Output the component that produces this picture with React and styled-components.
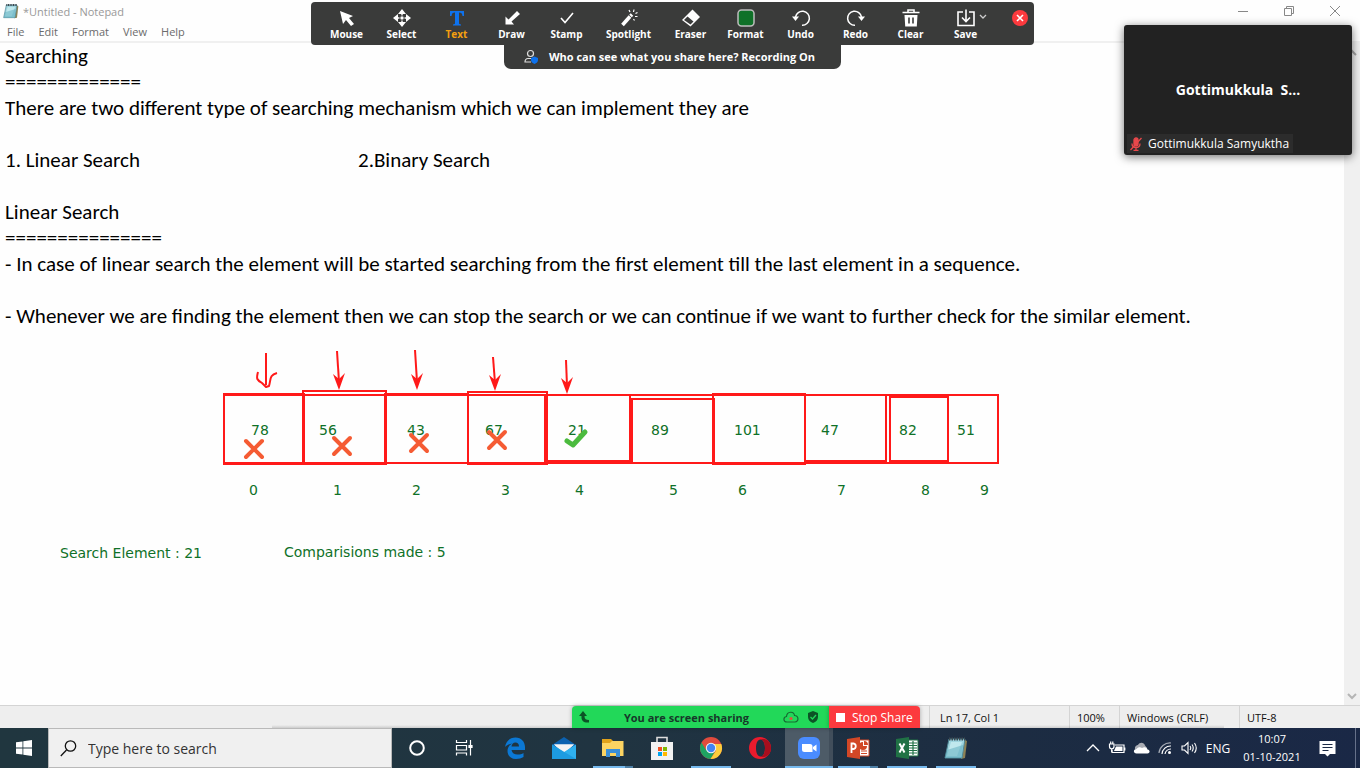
import React from "react";
import styled, { createGlobalStyle, css } from "styled-components";

const ui = `"Open Sans", "Noto Sans", sans-serif`;

const GlobalStyle = createGlobalStyle`
  * { box-sizing: border-box; }
  body { margin: 0; font-family: ${ui}; font-size: 12px; background: #fefefe; }
  button, input, textarea { font: inherit; color: inherit; border: 0; margin: 0; padding: 0; background: none; }
  svg { display: block; flex: none; }
`;

const Desktop = styled.div`
  position: relative;
  display: flex;
  flex-direction: column;
  min-height: 100vh;
  overflow: hidden;
`;

/* Notepad */
const Notepad = styled.main`
  flex: 1;
  display: flex;
  flex-direction: column;
  background: #fefefe;
`;
const TitleBar = styled.header`
  display: flex;
  align-items: center;
  height: 22px;
  padding: 0 2px 0 3px;
  color: #999;
  font-size: 11px;
`;
const Title = styled.h1`
  flex: 1;
  margin: 0;
  padding-left: 4px;
  font-size: inherit;
  font-weight: 400;
`;
const WindowButton = styled.button`
  display: grid;
  place-items: center;
  width: 46px;
  height: 20px;
`;
const MenuBar = styled.nav`
  display: flex;
  gap: 14px;
  height: 21px;
  padding-left: 7px;
  border-bottom: 2px solid #f0f0f0;
  color: #6b6b6b;
  font-size: 11px;
  line-height: 20px;
`;
const EditorArea = styled.div`
  flex: 1;
  display: flex;
`;
const Editor = styled.textarea`
  flex: 1;
  resize: none;
  outline: 0;
  overflow: hidden;
  padding: 0 5px;
  color: #000;
  font-family: Calibri, Carlito, Lato, sans-serif;
  font-size: 21px;
  line-height: 26px;
  tab-size: 353px;
  white-space: pre;
`;
const ScrollBar = styled.div`
  display: flex;
  flex-direction: column;
  justify-content: space-between;
  align-items: center;
  width: 16px;
  padding: 6px 0 5px;
  background: #f0f0f0;
`;
const StatusBar = styled.footer`
  display: flex;
  justify-content: flex-end;
  height: 23px;
  border-top: 1px solid #d4d4d4;
  background: #eee;
  color: #111;
  font-size: 11px;
  line-height: 23px;
`;
const StatusCell = styled.span`
  width: ${(p) => p.$width}px;
  padding-left: ${(p) => p.$pad || 7}px;
  border-left: 1px solid #d4d4d4;
  white-space: nowrap;
`;

/* Annotations drawn over the shared screen */
const Canvas = styled.div`
  position: absolute;
  inset: 0;
  pointer-events: none;
`;
const Strokes = styled.svg`
  position: absolute;
  left: 0;
  top: 0;
`;
const Note = styled.span`
  position: absolute;
  left: ${(p) => p.$x}px;
  top: ${(p) => p.$y}px;
  color: #0f7128;
  font-family: "DejaVu Sans", sans-serif;
  font-size: 14px;
  line-height: 20px;
  white-space: nowrap;
`;

/* Meeting controls */
const Controls = styled.div`
  position: absolute;
  top: 2px;
  left: 0;
  right: 15px;
  display: flex;
  flex-direction: column;
  align-items: center;
  pointer-events: none;
`;
const ToolBar = styled.div`
  display: flex;
  height: 43px;
  padding: 0 6px 0 8px;
  border-radius: 4px;
  background: #3a3b3a;
  color: #fff;
  pointer-events: auto;
`;
const Tool = styled.button`
  position: relative;
  display: flex;
  flex-direction: column;
  align-items: center;
  width: ${(p) => (p.$wide ? 69 : 55)}px;
  padding-top: 6px;
  color: ${(p) => (p.$active ? "#f5a010" : "#fff")};
  font-size: 10px;
  font-weight: 700;
  line-height: 12px;
`;
const Caret = styled.svg`
  position: absolute;
  left: 41px;
  top: 12px;
`;
const CloseTool = styled.button`
  align-self: flex-start;
  margin: 8px 0 0 19px;
  width: 16px;
  height: 16px;
`;
const Banner = styled.button`
  display: flex;
  align-items: center;
  gap: 10px;
  height: 24px;
  padding: 0 26px 2px 20px;
  border-radius: 0 0 7px 7px;
  background: #3a3b3a;
  color: #fff;
  font-size: 11px;
  font-weight: 700;
  pointer-events: auto;
`;
const Participant = styled.section`
  position: absolute;
  top: 25px;
  right: 8px;
  display: flex;
  flex-direction: column;
  width: 228px;
  height: 130px;
  border-radius: 3px;
  background: #222;
  box-shadow: 0 2px 10px rgba(0, 0, 0, 0.55);
  color: #fff;
`;
const ParticipantName = styled.strong`
  flex: 1;
  display: grid;
  place-items: end center;
  padding-bottom: 34px;
  font-size: 14px;
  white-space: pre;
  line-height: 20px;
`;
const ParticipantLabel = styled.span`
  display: flex;
  align-items: center;
  align-self: flex-start;
  gap: 5px;
  height: 19px;
  margin: 0 0 2px 3px;
  padding: 0 4px 0 2px;
  background: #2c2c2c;
  font-size: 12px;
`;
const ShareBar = styled.div`
  position: absolute;
  bottom: 40px;
  left: 0;
  right: 0;
  display: flex;
  justify-content: center;
  height: 22px;
  padding-left: 132px;
  pointer-events: none;
`;
const Sharing = styled.div`
  display: flex;
  align-items: center;
  justify-content: space-between;
  width: 257px;
  padding: 0 10px 0 6px;
  border-radius: 4px 0 0 0;
  background: #22d859;
  box-shadow: 0 0 4px rgba(0, 0, 0, 0.3);
  color: #17382a;
  font-size: 11px;
  font-weight: 700;
`;
const SharingIcons = styled.span`
  display: flex;
  align-items: center;
  gap: 8px;
`;
const StopShare = styled.button`
  display: flex;
  align-items: center;
  gap: 7px;
  width: 91px;
  padding-left: 7px;
  border-radius: 0 4px 0 0;
  background: #fc3a3e;
  box-shadow: 0 0 4px rgba(0, 0, 0, 0.3);
  color: #fff;
  font-size: 12px;
  white-space: nowrap;
  pointer-events: auto;
`;

/* Windows taskbar */
const TaskBar = styled.footer`
  position: relative;
  display: flex;
  height: 40px;
  background: linear-gradient(90deg, #20363f 0%, #203441 45%, #1c2c42 75%, #1a2846 100%);
  color: #fff;
`;
const EdgeShadow = styled.div`
  position: absolute;
  bottom: 40px;
  left: 20%;
  right: 10%;
  height: 3px;
  background: linear-gradient(transparent, rgba(0, 0, 0, 0.14));
`;
const Start = styled.button`
  display: grid;
  place-items: center;
  width: 48px;
`;
const Search = styled.label`
  display: flex;
  align-items: center;
  gap: 11px;
  width: 344px;
  padding-left: 11px;
  border: 1px solid #b9b9b9;
  background: #f0f0f0;
  color: #222;
`;
const SearchInput = styled.input`
  flex: 1;
  min-width: 0;
  outline: 0;
  font-size: 14px;
  &::placeholder { color: #333; opacity: 1; }
`;
const Apps = styled.div`
  flex: 1;
  display: flex;
  gap: 1px;
  padding-left: 1px;
`;
const AppButton = styled.button`
  position: relative;
  display: grid;
  place-items: center;
  width: 48px;
  ${(p) => p.$open && css`
    &::after {
      content: "";
      position: absolute;
      left: 4px;
      right: 4px;
      bottom: 0;
      height: 2px;
      background: ${p.$many ? "linear-gradient(90deg, #76b9ed 32px, #4d7fa5 32px)" : "#76b9ed"};
    }
  `}
  ${(p) => p.$current && css`
    background: linear-gradient(90deg, #4d5b67 44px, #414e5b 44px);
    &::after { left: 0; right: 0; }
  `}
`;
const Tray = styled.div`
  display: flex;
  align-items: center;
  padding-right: 4px;
`;
const TrayButton = styled.button`
  display: grid;
  place-items: center;
  width: ${(p) => p.$width || 24}px;
  height: 40px;
  font-size: 12px;
`;
const Clock = styled.time`
  width: 70px;
  margin-left: 2px;
  text-align: center;
  font-size: 11px;
  line-height: 18px;
`;
const Peek = styled.span`
  height: 40px;
  margin-left: 8px;
  border-left: 1px solid #66718a;
`;

const text = [
  "Searching",
  "=============",
  "There are two different type of searching mechanism which we can implement they are",
  "",
  "1. Linear Search\t2.Binary Search",
  "",
  "Linear Search",
  "===============",
  "- In case of linear search the element will be started searching from the first element till the last element in a sequence.",
  "",
  "- Whenever we are finding the element then we can stop the search or we can continue if we want to further check for the similar element.",
].join("\n");

const boxes = [
  [224, 395, 998, 463], [224, 394, 304, 464], [303, 391, 386, 464], [385, 394, 468, 463],
  [468, 392, 547, 464], [545, 395, 630, 461], [632, 399, 714, 463], [713, 394, 805, 464],
  [805, 395, 886, 461], [890, 397, 948, 461],
];
const arrows = [[337, 351, 339, 390], [415, 350, 417, 390], [493, 357, 495, 391], [566, 360, 567, 394]];
const crosses = [[254, 449], [342, 446], [419, 443], [497, 440]];
const values = [[251, "78"], [319, "56"], [407, "43"], [485, "67"], [568, "21"], [651, "89"], [734, "101"], [821, "47"], [899, "82"], [957, "51"]];
const indexes = [249, 333, 412, 501, 575, 669, 738, 837, 921, 980];

const NotepadIcon = ({ size = 16 }) => (
  <svg width={size} height={size} viewBox="0 0 24 24">
    <path d="M19 3 23 5 21 22 17 23Z" fill="#8d8256" />
    <path d="M5 3H21L18 22H1Z" fill="#9fd5df" stroke="#4e8795" />
    <path d="M7 6H18L13 20H3Z" fill="#d3f2f5" opacity=".65" />
    <path d="M3 14 19 9 18 22H1Z" fill="#5aa9bb" opacity=".5" />
    <path d="M5 3H21" stroke="#3c4950" strokeWidth="3" strokeDasharray="1.5 1" />
  </svg>
);

const toolIcons = {
  Mouse: <path d="M4 3 17 8 13 10 18 16 15 18 10 12 7 16Z" fill="#fff" transform="translate(-1 0)" />,
  Select: (
    <g fill="#fff">
      <path d="M10 1 14 6H6ZM10 19 14 14H6ZM1 10 6 6V14ZM19 10 14 6V14Z" />
      <path d="M10 5V15M5 10H15" stroke="#fff" strokeWidth="1.4" />
      <circle cx="10" cy="10" r="2.2" stroke="#3a3b3a" />
    </g>
  ),
  Text: (
    <path d="M3 3H17V8H15.5C15 5.500 14.500 4.600 12 4.600V15C12 16 12.500 16.300 14 16.500V17.500H6V16.500C7.500 16.300 8 16 8 15V4.600C5.500 4.600 5 5.500 4.500 8H3Z" fill="#0e72ed" />
  ),
  Draw: <path d="M15 3 18 6 9.500 13.500 12 16.500H3.500V8.500L6.500 11.500Z" fill="#fff" />,
  Stamp: <path d="M4 10 8 14.500 16 5" fill="none" stroke="#fff" strokeWidth="1.600" />,
  Spotlight: (
    <g stroke="#fff" fill="#fff">
      <path d="M3.500 17 11 8.500" strokeWidth="3.600" />
      <path d="M11.500 8 13 6.500" strokeWidth="3.600" />
      <path d="M10 2 11 4M15 1.500 14.500 4M18.500 4.500 16.500 5.500M16 8.500H18.500M14.500 11 15.500 12.500" strokeWidth="1.200" />
    </g>
  ),
  Eraser: (
    <g>
      <path d="M1 12 11.500 1.500 19 9 9.500 18.500Z" fill="#fff" />
      <path d="M3 12 6.500 8.500 12.500 13.500 9.500 16.500Z" fill="#3a3b3a" />
    </g>
  ),
  Format: <rect x="2" y="2" width="16" height="16" rx="3.500" fill="#0f7128" stroke="#bdbdbd" strokeWidth="1.500" />,
  Undo: (
    <g>
      <path d="M4.500 9A7 7 0 1 1 11 17.200" fill="none" stroke="#fff" strokeWidth="1.500" />
      <path d="M1 8.500H8L4.500 13Z" fill="#fff" />
    </g>
  ),
  Redo: (
    <g>
      <path d="M15.500 9A7 7 0 1 0 9 17.200" fill="none" stroke="#fff" strokeWidth="1.500" />
      <path d="M19 8.500H12L15.500 13Z" fill="#fff" />
    </g>
  ),
  Clear: (
    <g fill="none" stroke="#fff" strokeWidth="1.600">
      <path d="M1.500 4.500H18.500M7 4V2H13V4" />
      <path d="M3.500 7H16.500L15.800 18.500H4.200Z" fill="#fff" stroke="none" />
      <path d="M8 9.500V15.500M12 9.500V15.500" stroke="#3a3b3a" />
    </g>
  ),
  Save: (
    <g fill="none" stroke="#fff" strokeWidth="1.600">
      <path d="M7 4H2V17.500H18V4H13" />
      <path d="M10 1.500V13M6 9.500 10 13.500 14 9.500" />
    </g>
  ),
};

const appIcons = [
  { name: "Cortana", art: <circle cx="12" cy="12" r="6.800" fill="none" stroke="#fff" strokeWidth="2" /> },
  {
    name: "Task View",
    art: (
      <g fill="none" stroke="#fff" strokeWidth="1.200" transform="translate(-2 0)">
        <path d="M4.500 4V6.500H14.500V4M4.500 19.500V17H14.500V19.500M4.500 9.500H14.500V14H4.500ZM18.500 4V19.500" />
        <path d="M17 9.500H20V11.500H17Z" fill="#fff" />
      </g>
    ),
  },
  {
    name: "Edge",
    art: <path d="M2 11C3 5 7 1.500 12.500 1.500 18.500 1.500 22 6 22 11V14H8.500C9 17 11.500 18.500 14.500 18.500 17 18.500 19 18 20.500 17V21C18.500 22.300 16 23 13 23 7.500 23 4.500 19.500 4.500 15 4.500 11.500 6.500 8.500 9.500 7.500 6.500 7.700 3.800 9 2 11ZM8.500 10.500H16C16 8 14.500 6.500 12.500 6.500 10 6.500 8.700 8.200 8.500 10.500Z" fill="#0b78d4" fillRule="evenodd" />,
  },
  {
    name: "Mail",
    art: (
      <g>
        <path d="M0 9 12 1 24 9V23H0Z" fill="#0c62b0" />
        <path d="M2 8.500H22L13 17H11Z" fill="#f4f4f4" />
        <path d="M0 8.500 12 16 24 8.500V23H0Z" fill="#2fb0ee" />
        <path d="M2 8.500H22L12 15.500Z" fill="#f4f4f4" />
        <path d="M0 8.500V23H24Z" fill="#1593dc" opacity=".7" />
      </g>
    ),
  },
  {
    name: "File Explorer",
    open: true,
    many: true,
    art: (
      <g>
        <path d="M1 3H10L12 5H22V20H1Z" fill="#e0a21b" />
        <path d="M1 7H9L11 5H22.500V20H1Z" fill="#fcd462" />
        <path d="M5 21V13H19V21H15V17H9V21Z" fill="#3a8fd8" />
      </g>
    ),
  },
  {
    name: "Microsoft Store",
    art: (
      <g>
        <path d="M7 7V1.500H17V7" fill="none" stroke="#ddd" strokeWidth="1.600" />
        <path d="M1 6H23V24H1Z" fill="#f2f2f2" />
        <path d="M8 11h4v4H8Z" fill="#f25022" />
        <path d="M13 11h4v4H13Z" fill="#7fba00" />
        <path d="M8 16h4v4H8Z" fill="#00a4ef" />
        <path d="M13 16h4v4H13Z" fill="#ffb900" />
      </g>
    ),
  },
  {
    name: "Chrome",
    open: true,
    art: (
      <g>
        <circle cx="12" cy="12" r="11" fill="#e04b3e" />
        <path d="M2.500 6.500A11 11 0 0 0 11.500 23L16.500 14.500 12 12 7 14Z" fill="#1ea362" />
        <path d="M22.300 8H12L17 14.500 11.500 23A11 11 0 0 0 22.300 8Z" fill="#fccd3c" />
        <circle cx="12" cy="12" r="5.200" fill="#f4f4f4" />
        <circle cx="12" cy="12" r="4.200" fill="#4285f4" />
      </g>
    ),
  },
  {
    name: "Opera",
    art: (
      <g>
        <path d="M12 1A11 11 0 1 0 12 23 11 11 0 1 0 12 1ZM12.500 3.500C15.500 3.500 17 7.500 17 12S15.500 20.500 12.500 20.500 8 16.500 8 12 9.500 3.500 12.500 3.500Z" fill="#ea1b2d" fillRule="evenodd" />
        <path d="M12.500 3.500C15.500 3.500 17 7.500 17 12S15.500 20.500 12.500 20.500C15 22 23 21 23 12S15 2 12.500 3.500Z" fill="#a70e1d" />
      </g>
    ),
  },
  {
    name: "Zoom",
    open: true,
    current: true,
    art: (
      <g>
        <rect x="1" y="1" width="22" height="22" rx="6" fill="#4a8cff" />
        <path d="M5 8H13A2.500 2.500 0 0 1 15.500 10.500V16H7.500A2.500 2.500 0 0 1 5 13.500ZM16 11 19.500 8.500V15.500L16 13Z" fill="#fff" />
      </g>
    ),
  },
  {
    name: "PowerPoint",
    open: true,
    many: true,
    art: (
      <g>
        <path d="M11 4H23V20H11Z" fill="#fff" stroke="#d24726" />
        <path d="M15 15H21M15 17.500H21" stroke="#d24726" strokeWidth="1.200" />
        <path d="M17 6V10H21A4 4 0 1 1 17 6ZM18 5A4 4 0 0 1 22 9H18Z" fill="#d24726" />
        <path d="M1 3 14 1V23L1 21Z" fill="#d24726" />
        <path d="M5.500 17V7.500H7.500A2.800 2.800 0 0 1 7.500 13H5.500" fill="none" stroke="#fff" strokeWidth="1.800" />
      </g>
    ),
  },
  {
    name: "Excel",
    open: true,
    art: (
      <g>
        <path d="M11 4H23V20H11Z" fill="#fff" stroke="#207245" />
        <path d="M14 7H22M14 9.500H22M14 12H22M14 14.500H22M14 17H22M18 5V19" stroke="#207245" strokeWidth="1.200" />
        <path d="M1 3 14 1V23L1 21Z" fill="#207245" />
        <path d="M4.500 7.500 9.500 16.500M9.500 7.500 4.500 16.500" stroke="#fff" strokeWidth="2" />
      </g>
    ),
  },
];

export default function App() {
  return (
    <>
      <GlobalStyle />
      <Desktop>
        <Notepad>
          <TitleBar>
            <NotepadIcon />
            <Title>*Untitled - Notepad</Title>
            <WindowButton aria-label="Minimize">
              <svg width="12" height="12"><path d="M1 6.500H11" stroke="#888" /></svg>
            </WindowButton>
            <WindowButton aria-label="Restore">
              <svg width="12" height="12"><path d="M1.500 3.500H8.500V10.500H1.500ZM3.500 3.500V1.500H10.500V8.500H8.500" fill="none" stroke="#888" /></svg>
            </WindowButton>
            <WindowButton aria-label="Close">
              <svg width="12" height="12"><path d="M1 1 11 11M11 1 1 11" stroke="#888" /></svg>
            </WindowButton>
          </TitleBar>
          <MenuBar>
            {["File", "Edit", "Format", "View", "Help"].map((m) => <button key={m}>{m}</button>)}
          </MenuBar>
          <EditorArea>
            <Editor aria-label="Document" wrap="off" spellCheck={false} defaultValue={text} />
            <ScrollBar>
              <svg width="10" height="8"><path d="M1 6 5 2 9 6" fill="none" stroke="#a5a5a5" strokeWidth="2" /></svg>
              <svg width="10" height="8"><path d="M1 2 5 6 9 2" fill="none" stroke="#b5b5b5" strokeWidth="2" /></svg>
            </ScrollBar>
          </EditorArea>
          <StatusBar>
            <StatusCell $width={140} $pad={10}>Ln 17, Col 1</StatusCell>
            <StatusCell $width={50}>100%</StatusCell>
            <StatusCell $width={120}>Windows (CRLF)</StatusCell>
            <StatusCell $width={121}>UTF-8</StatusCell>
          </StatusBar>
        </Notepad>

        <TaskBar>
          <EdgeShadow />
          <Start aria-label="Start">
            <svg width="16" height="16" viewBox="0 0 16 16">
              <path d="M0 2.300 6.500 1.400V7.500H0ZM7.300 1.300 16 0V7.500H7.300ZM0 8.400H6.500V14.600L0 13.700ZM7.300 8.400H16V16L7.300 14.700Z" fill="#fff" />
            </svg>
          </Start>
          <Search>
            <svg width="17" height="17" viewBox="0 0 17 17" fill="none" stroke="#111" strokeWidth="1.300">
              <circle cx="10.500" cy="6" r="5.200" />
              <path d="M6.500 10 .8 16" />
            </svg>
            <SearchInput type="text" placeholder="Type here to search" aria-label="Type here to search" />
          </Search>
          <Apps>
            {appIcons.map((a) => (
              <AppButton key={a.name} aria-label={a.name} $open={a.open} $many={a.many} $current={a.current}>
                <svg width="24" height="24" viewBox="0 0 24 24">{a.art}</svg>
              </AppButton>
            ))}
            <AppButton aria-label="Notepad" $open><NotepadIcon size={24} /></AppButton>
          </Apps>
          <Tray>
            <TrayButton aria-label="Show hidden icons">
              <svg width="14" height="8"><path d="M1 7 7 1 13 7" fill="none" stroke="#fff" strokeWidth="1.300" /></svg>
            </TrayButton>
            <TrayButton aria-label="Battery">
              <svg width="18" height="14" viewBox="0 0 18 14" fill="none" stroke="#fff" strokeWidth="1.200">
                <path d="M7 4H16V11.500H4V9M16.800 6.500V9.500" />
                <path d="M1.500 3H6V5.500A2 2 0 0 1 1.500 5.500ZM2.700 3V.5M4.800 3V.5M3.700 8V11" />
                <path d="M8 5.500H14.500V10H6Z" fill="#fff" stroke="none" />
              </svg>
            </TrayButton>
            <TrayButton aria-label="OneDrive">
              <svg width="17" height="12" viewBox="0 0 17 12">
                <path d="M2 7C1.500 4 4 3 5 3 6.500 0 11 0 12 3.500L14 6 8 8Z" fill="#a9acb3" />
                <path d="M3.500 11.500C0 11.500 0 7 3.500 7 5 5 7.500 5 9 6 11 4.500 14 5 14.500 7.500 17.500 8 17 11.500 14.500 11.500Z" fill="#fff" />
              </svg>
            </TrayButton>
            <TrayButton aria-label="Network">
              <svg width="14" height="14" viewBox="0 0 14 14" fill="none" stroke="#fff" strokeWidth="1.200">
                <path d="M1 12A11 11 0 0 1 13 2" opacity=".6" />
                <path d="M4 13A8.500 8.500 0 0 1 13 5M7 13A6 6 0 0 1 13 8" />
                <circle cx="11.500" cy="11.500" r="1.500" fill="#fff" stroke="none" />
              </svg>
            </TrayButton>
            <TrayButton aria-label="Volume">
              <svg width="17" height="14" viewBox="0 0 17 14" fill="none" stroke="#fff" strokeWidth="1.100">
                <path d="M1 5H3.500L7 1.500V12.500L3.500 9H1ZM9 5Q10.500 7 9 9M11 3.500Q13.500 7 11 10.500M13.500 2Q17 7 13.500 12" />
              </svg>
            </TrayButton>
            <TrayButton $width={34}>ENG</TrayButton>
            <Clock>10:07<br />01-10-2021</Clock>
            <TrayButton aria-label="Notifications" $width={40}>
              <svg width="17" height="17" viewBox="0 0 17 17">
                <path d="M.5 1H16.500V14H11L8.500 16.500 6 14H.5Z" fill="#fff" />
                <path d="M3.500 4.500H13.500M3.500 7.500H13.500M3.500 10.500H9.500" stroke="#1b2a45" strokeWidth="1.200" />
              </svg>
            </TrayButton>
            <Peek />
          </Tray>
        </TaskBar>

        <Canvas>
          <Strokes width="1000" height="500" fill="none" stroke="#ff1919" strokeWidth="2">
            {boxes.map(([x, y, r, b]) => <rect key={`${x}-${y}`} x={x} y={y} width={r - x} height={b - y} />)}
            <path d="M266 353V385M258 372C256 379 257 380 262 383L266 387 269 386C271 380 269 375 277 373" strokeLinejoin="round" />
            {arrows.map(([x, y, tx, ty]) => (
              <g key={x}>
                <path d={`M${x} ${y}L${tx} ${ty - 8}`} />
                <path d={`M${tx} ${ty}L${tx - 6} ${ty - 16}L${tx} ${ty - 11}L${tx + 6} ${ty - 17}Z`} fill="#ff1919" stroke="none" />
              </g>
            ))}
          </Strokes>
          {values.map(([x, v]) => <Note key={v} $x={x} $y={420}>{v}</Note>)}
          {indexes.map((x, i) => <Note key={x} $x={x} $y={480}>{i}</Note>)}
          <Note $x={60} $y={543}>Search Element : 21</Note>
          <Note $x={284} $y={542}>Comparisions made : 5</Note>
          <Strokes width="1000" height="500" fill="none" strokeWidth="5" strokeLinecap="round" strokeLinejoin="round">
            {crosses.map(([x, y]) => (
              <path key={x} d={`M${x - 8} ${y - 8}L${x + 8} ${y + 8}M${x + 8} ${y - 8}L${x - 8} ${y + 8}`} stroke="#f55b33" strokeWidth="4" />
            ))}
            <path d="M567 441 573 445 585 432" stroke="#4bbb3e" />
          </Strokes>
        </Canvas>

        <Controls>
          <ToolBar>
            {Object.keys(toolIcons).map((name) => (
              <Tool key={name} $wide={name === "Spotlight"} $active={name === "Text"}>
                <svg width="20" height="20" viewBox="0 0 20 20">{toolIcons[name]}</svg>
                {name}
                {name === "Save" && (
                  <Caret width="8" height="6"><path d="M1 1 4 4 7 1" fill="none" stroke="#ccc" strokeWidth="1.300" /></Caret>
                )}
              </Tool>
            ))}
            <CloseTool aria-label="Close toolbar">
              <svg width="16" height="16">
                <circle cx="8" cy="8" r="8" fill="#fc3a3e" />
                <path d="M5 5 11 11M11 5 5 11" stroke="#fff" strokeWidth="1.600" />
              </svg>
            </CloseTool>
          </ToolBar>
          <Banner>
            <svg width="15" height="15" viewBox="0 0 15 15" fill="none" stroke="#ddd" strokeWidth="1.200">
              <circle cx="6.500" cy="4.500" r="3" />
              <path d="M7 9.500H4C2 9.500 1 11 1 13H7" />
              <path d="M10.500 7.500 14 9V11C14 13 12.500 14 10.500 15 8.500 14 7 13 7 11V9Z" fill="#0e72ed" stroke="none" />
            </svg>
            Who can see what you share here? Recording On
          </Banner>
        </Controls>

        <Participant>
          <ParticipantName>{"Gottimukkula  S..."}</ParticipantName>
          <ParticipantLabel>
            <svg width="14" height="14" viewBox="0 0 14 14" fill="none" stroke="#e8484b" strokeWidth="1.300">
              <rect x="5" y="1" width="4" height="8" rx="2" fill="#e8484b" />
              <path d="M3 6.500C3 12 11 12 11 6.500M7 11V13.500M4.500 13.500H9.500M1.500 13 12.500 1" />
            </svg>
            Gottimukkula Samyuktha
          </ParticipantLabel>
        </Participant>

        <ShareBar>
          <Sharing>
            <svg width="12" height="12" viewBox="0 0 12 12"><path d="M1 5 5 0 9 5H6.500C6.500 8 8 9 11 9V11.500C6 12 3 10 3.500 5Z" fill="#0c5426" /></svg>
            You are screen sharing
            <SharingIcons>
              <svg width="16" height="12" viewBox="0 0 16 12" fill="none" stroke="#176b32" strokeWidth="1.200">
                <path d="M4 11C0 11 0 6 3.500 5.500 4 0 11 0 11.500 4.500 16 4.500 16 11 12 11Z" />
                <circle cx="8" cy="7.500" r="1.600" fill="#e0533e" stroke="none" />
              </svg>
              <svg width="12" height="12" viewBox="0 0 12 12">
                <path d="M6 0 11 2V6C11 9 9 11 6 12 3 11 1 9 1 6V2Z" fill="#0c5426" />
                <path d="M3.500 6 5.500 8 9 4" fill="none" stroke="#22d859" strokeWidth="1.300" />
              </svg>
            </SharingIcons>
          </Sharing>
          <StopShare>
            <svg width="9" height="9"><path d="M0 0H9V9H0Z" fill="#fff" /></svg>
            Stop Share
          </StopShare>
        </ShareBar>
      </Desktop>
    </>
  );
}
